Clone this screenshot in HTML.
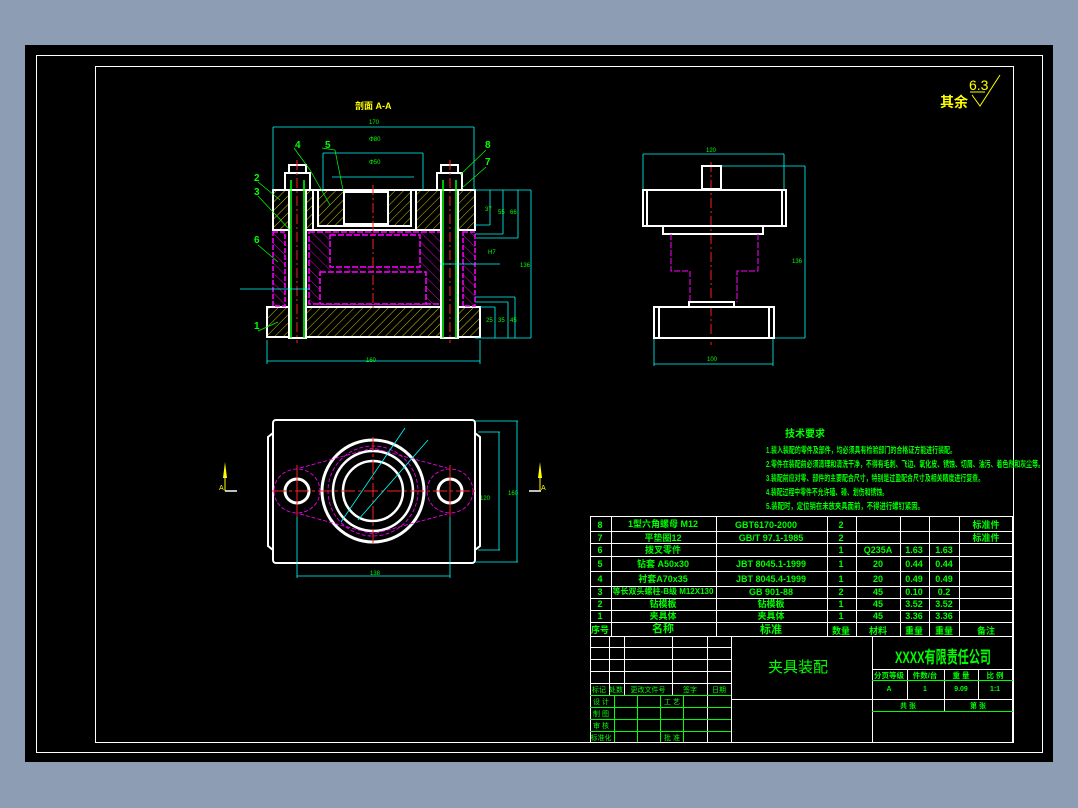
<!DOCTYPE html>
<html><head><meta charset="utf-8"><style>
html,body{margin:0;padding:0;width:1078px;height:808px;overflow:hidden;background:#8d9db3}
svg{position:absolute;left:0;top:0}
text{font-family:"Liberation Sans","Noto Sans CJK SC",sans-serif}
</style></head><body>
<svg width="1078" height="808" viewBox="0 0 1078 808">
<defs>
<pattern id="hy" width="6" height="6" patternUnits="userSpaceOnUse" patternTransform="rotate(45)"><line x1="0" y1="0" x2="0" y2="6" stroke="#ffff00" stroke-width="0.8"/></pattern>
<pattern id="hm" width="7" height="7" patternUnits="userSpaceOnUse" patternTransform="rotate(-45)"><line x1="0" y1="0" x2="0" y2="7" stroke="#ff00ff" stroke-width="0.8"/></pattern>
</defs>
<rect x="0" y="0" width="1078" height="808" fill="#8d9db3"/>
<rect x="25" y="45" width="1028" height="717" fill="#000"/>
<rect x="36.5" y="55.5" width="1006" height="697" fill="none" stroke="#fff" stroke-width="1"/>
<rect x="95.5" y="66.5" width="918" height="676" fill="none" stroke="#fff" stroke-width="1"/>

<text x="940" y="107" fill="#ffff00" font-size="14" font-weight="bold">其余</text>
<text x="969" y="90" fill="#ffff00" font-size="14">6.3</text>
<path d="M970 92 L985 92 M972 95 L980 106 L1000 75" stroke="#ffff00" fill="none" stroke-width="1"/>
<text x="355" y="109" fill="#ffff00" font-size="9" font-weight="bold">剖面 A-A</text>

<g fill="none" stroke-width="2">
<rect x="267" y="307" width="213" height="30" fill="url(#hy)" stroke="#fff"/>
<rect x="273" y="190" width="202" height="40" fill="url(#hy)" stroke="#fff"/>
<rect x="313" y="190" width="103" height="40" fill="#000" stroke="#fff"/>
<rect x="318" y="190" width="93" height="36" fill="url(#hy)" stroke="#fff"/>
<rect x="344" y="192" width="44" height="32" fill="#000" stroke="#fff"/>
<rect x="309" y="232" width="133" height="72" fill="url(#hm)" stroke="#ff00ff" stroke-dasharray="6 2" stroke-width="1.5"/>
<rect x="320" y="272" width="106" height="32" fill="#000" stroke="#ff00ff" stroke-dasharray="6 2" stroke-width="1.5"/>
<rect x="330" y="235" width="90" height="32" fill="#000" stroke="#ff00ff" stroke-dasharray="6 2" stroke-width="1.5"/>
<rect x="273" y="232" width="12" height="74" fill="url(#hm)" stroke="#ff00ff" stroke-dasharray="5 2" stroke-width="1.5"/>
<rect x="463" y="232" width="12" height="74" fill="url(#hm)" stroke="#ff00ff" stroke-dasharray="5 2" stroke-width="1.5"/>
<rect x="289" y="165" width="17" height="173" fill="#000" stroke="#fff"/>
<rect x="441" y="165" width="17" height="173" fill="#000" stroke="#fff"/>
<rect x="285" y="173" width="25" height="17" fill="#000" stroke="#fff"/>
<rect x="437" y="173" width="25" height="17" fill="#000" stroke="#fff"/>
<line x1="291" y1="180" x2="291" y2="338" stroke="#00ff00" stroke-width="1.5"/><line x1="304" y1="180" x2="304" y2="338" stroke="#00ff00" stroke-width="1.5"/>
<line x1="443" y1="180" x2="443" y2="338" stroke="#00ff00" stroke-width="1.5"/><line x1="456" y1="180" x2="456" y2="338" stroke="#00ff00" stroke-width="1.5"/>
</g>
<g stroke="#ff2020" stroke-width="1" stroke-dasharray="10 3 2 3">
<line x1="297" y1="160" x2="297" y2="343"/><line x1="450" y1="160" x2="450" y2="343"/><line x1="373" y1="185" x2="373" y2="310"/>
<line x1="711" y1="162" x2="711" y2="345"/>
</g>
<g stroke="#00ffff" stroke-width="0.8" fill="none">
<path d="M273 127 H474 M273 127 V190 M474 127 V190"/>
<path d="M323 153 H423 M323 153 V190 M423 153 V190"/>
<path d="M332 177 H414"/>
<path d="M267 361 H480 M267 340 V364 M480 340 V364"/>
<path d="M475 190 H531 M531 190 V338 M475 338 H531"/>
<path d="M475 225 H490 M490 190 V225 M475 234 H503 M503 190 V234 M476 238 H518 M518 190 V238"/>
<path d="M475 297 H515 M515 297 V338 M475 302 H508 M508 302 V338 M480 307 H495 M495 307 V338"/>
<path d="M240 289 H310 M440 264 H500"/>
<path d="M643 154 H784 M643 154 V190 M784 154 V190"/>
<path d="M719 166 H805 M805 166 V338 M772 338 H805"/>
<path d="M654 364 H773 M654 338 V366 M773 338 V366"/>
</g>
<g fill="#00ff00" font-size="6">
<text x="369" y="124">170</text><text x="369" y="141">Φ80</text><text x="369" y="164">Φ50</text><text x="366" y="362">160</text>
<text x="485" y="211">37</text><text x="498" y="214">55</text><text x="510" y="214">66</text><text x="520" y="267">136</text>
<text x="486" y="322">25</text><text x="498" y="322">35</text><text x="510" y="322">45</text><text x="488" y="254">H7</text>
<text x="706" y="152">120</text><text x="792" y="263">136</text><text x="707" y="361">100</text>
<text x="480" y="500">120</text><text x="508" y="495">160</text><text x="370" y="575">138</text>
</g>
<g fill="#00ff00" font-size="10" font-weight="bold">
<text x="295" y="148">4</text><text x="325" y="148">5</text><text x="485" y="148">8</text><text x="485" y="165">7</text>
<text x="254" y="181">2</text><text x="254" y="195">3</text><text x="254" y="243">6</text><text x="254" y="329">1</text>
</g>
<g stroke="#00ff00" stroke-width="0.7" fill="none">
<path d="M294 148 L310 170 L330 205 M322 148 L335 150 L343 190 M486 150 L460 175 M486 167 L462 188 M258 182 L280 200 M258 196 L290 230 M258 245 L278 262 M258 331 L278 322"/>
</g>

<g fill="none" stroke="#fff" stroke-width="2">
<rect x="702" y="166" width="19" height="23"/>
<rect x="643" y="190" width="143" height="36"/>
<line x1="647" y1="190" x2="647" y2="226"/><line x1="782" y1="190" x2="782" y2="226"/>
<rect x="663" y="226" width="100" height="8"/>
<rect x="654" y="307" width="120" height="31"/>
<line x1="659" y1="307" x2="659" y2="338"/><line x1="769" y1="307" x2="769" y2="338"/>
<rect x="689" y="302" width="45" height="5"/>
</g>
<path d="M671 234 V271 H690 V302 M758 234 V271 H737 V302" fill="none" stroke="#ff00ff" stroke-dasharray="6 2"/>

<g fill="none" stroke="#fff" stroke-width="2">
<rect x="273" y="420" width="202" height="143" rx="3"/>
<path d="M273 433 L268 437 V546 L273 550 M475 433 L480 437 V546 L475 550"/>
<circle cx="373" cy="491" r="51" stroke-width="3"/>
<circle cx="373" cy="491" r="40" stroke-width="2.5"/>
<circle cx="373" cy="491" r="30" stroke-width="2.5"/>
<circle cx="297" cy="491" r="12" stroke-width="3"/>
<circle cx="450" cy="491" r="12" stroke-width="3"/>
</g>
<g fill="none" stroke="#ff00ff" stroke-width="0.8" stroke-dasharray="4 2">
<ellipse cx="297" cy="491" rx="23" ry="22"/><ellipse cx="450" cy="491" rx="23" ry="22"/>
<circle cx="373" cy="491" r="45"/>
<path d="M300 468 L373 448 L447 468 M300 514 L373 534 L447 514"/>
</g>
<g stroke="#ff2020" stroke-width="1">
<line x1="272" y1="491" x2="475" y2="491" stroke-dasharray="14 3 3 3"/>
<line x1="373" y1="437" x2="373" y2="545" stroke-dasharray="14 3 3 3"/>
<line x1="297" y1="465" x2="297" y2="517"/><line x1="450" y1="465" x2="450" y2="517"/>
</g>
<g stroke="#00ffff" stroke-width="0.8" fill="none">
<path d="M341 522 L405 428 M358 520 L428 440 M297 517 V578 M450 517 V578 M297 576 H450"/>
<path d="M475 421 H518 M517 421 V562 M475 562 H518 M478 432 H500 M499 432 V550 M478 550 H500"/>
</g>
<g fill="#ffff00"><path d="M225 462 L227 478 H223 Z"/><path d="M540 462 L542 478 H538 Z"/></g>
<g stroke="#fff" stroke-width="1.5"><line x1="225" y1="491" x2="237" y2="491"/><line x1="529" y1="491" x2="541" y2="491"/></g>
<g stroke="#ffff00"><line x1="225" y1="478" x2="225" y2="491"/><line x1="540" y1="478" x2="540" y2="491"/></g>
<text x="219" y="490" fill="#ffff00" font-size="7">A</text><text x="541" y="490" fill="#ffff00" font-size="7">A</text>

<g fill="#00ff00" font-size="8.5" font-weight="bold">
<text x="785" y="437" font-size="10">技术要求</text>
<text x="766" y="453" textLength="190" lengthAdjust="spacingAndGlyphs">1.装入装配的零件及部件，均必须具有检验部门的合格证方能进行装配。</text>
<text x="766" y="467" textLength="278" lengthAdjust="spacingAndGlyphs">2.零件在装配前必须清理和清洗干净，不得有毛刺、飞边、氧化皮、锈蚀、切屑、油污、着色剂和灰尘等。</text>
<text x="766" y="481" textLength="218" lengthAdjust="spacingAndGlyphs">3.装配前应对零、部件的主要配合尺寸，特别是过盈配合尺寸及相关精度进行复查。</text>
<text x="766" y="495" textLength="122" lengthAdjust="spacingAndGlyphs">4.装配过程中零件不允许磕、碰、划伤和锈蚀。</text>
<text x="766" y="509" textLength="158" lengthAdjust="spacingAndGlyphs">5.装配时，定位销在未放夹具面前，不得进行螺钉紧固。</text>
</g>

<g stroke="#fff" stroke-width="1" fill="none">
<rect x="590.5" y="516.5" width="422" height="226"/>
<path d="M590 531.5 H1013 M590 543.5 H1013 M590 556.5 H1013 M590 571.5 H1013 M590 586.5 H1013 M590 598.5 H1013 M590 610.5 H1013 M590 622.5 H1013 M590 636.5 H1013"/>
<path d="M611.5 516 V636 M716.5 516 V636 M827.5 516 V636 M856.5 516 V636 M900.5 516 V636 M929.5 516 V636 M959.5 516 V636"/>
<path d="M590 647.5 H731 M590 659.5 H731 M590 671.5 H731 M590 683.5 H731 M609.5 636 V695 M624.5 636 V695 M672.5 636 V695 M707.5 636 V742 M731.5 636 V742 M872.5 636 V742"/>
<path d="M731 699.5 H872 M872 669.5 H1013 M872 699.5 H1013 M907.5 669 V699 M944.5 669 V711 M978.5 669 V699"/>
</g>
<g stroke="#00ff00" stroke-width="1" fill="none">
<path d="M590 695.5 H731 M590 707.5 H731 M590 719.5 H731 M590 731.5 H731 M614.5 695 V742 M637.5 695 V742 M660.5 695 V742 M683.5 695 V742"/>
<path d="M872 680.5 H1013 M872 711.5 H1013"/>
</g>
<g fill="#00ff00" font-size="9" text-anchor="middle" font-weight="bold">
<text x="600" y="528">8</text><text x="663" y="527">1型六角螺母 M12</text><text x="766" y="528">GBT6170-2000</text><text x="841" y="528">2</text><text x="986" y="528">标准件</text>
<text x="600" y="541">7</text><text x="663" y="541">平垫圈12</text><text x="771" y="541">GB/T 97.1-1985</text><text x="841" y="541">2</text><text x="986" y="541">标准件</text>
<text x="600" y="553">6</text><text x="663" y="553">拨叉零件</text><text x="841" y="553">1</text><text x="878" y="553">Q235A</text><text x="914" y="553">1.63</text><text x="944" y="553">1.63</text>
<text x="600" y="567">5</text><text x="663" y="567">钻套 A50x30</text><text x="771" y="567">JBT 8045.1-1999</text><text x="841" y="567">1</text><text x="878" y="567">20</text><text x="914" y="567">0.44</text><text x="944" y="567">0.44</text>
<text x="600" y="582">4</text><text x="663" y="582">衬套A70x35</text><text x="771" y="582">JBT 8045.4-1999</text><text x="841" y="582">1</text><text x="878" y="582">20</text><text x="914" y="582">0.49</text><text x="944" y="582">0.49</text>
<text x="600" y="595">3</text><text x="663" y="594" font-size="8">等长双头螺柱-B级 M12X130</text><text x="771" y="595">GB 901-88</text><text x="841" y="595">2</text><text x="878" y="595">45</text><text x="914" y="595">0.10</text><text x="944" y="595">0.2</text>
<text x="600" y="607">2</text><text x="663" y="607">钻模板</text><text x="771" y="607">钻模板</text><text x="841" y="607">1</text><text x="878" y="607">45</text><text x="914" y="607">3.52</text><text x="944" y="607">3.52</text>
<text x="600" y="619">1</text><text x="663" y="619">夹具体</text><text x="771" y="619">夹具体</text><text x="841" y="619">1</text><text x="878" y="619">45</text><text x="914" y="619">3.36</text><text x="944" y="619">3.36</text>
<text x="600" y="633">序号</text><text x="663" y="632" font-size="11">名称</text><text x="771" y="633" font-size="11">标准</text><text x="841" y="634">数量</text><text x="878" y="634">材料</text><text x="914" y="634">重量</text><text x="944" y="634">重量</text><text x="986" y="634">备注</text>
<text x="943" y="663" font-size="17" textLength="96" lengthAdjust="spacingAndGlyphs">XXXX有限责任公司</text>
<text x="889" y="678" font-size="7.5">分页等级</text><text x="925" y="678" font-size="7.5">件数/台</text><text x="961" y="678" font-size="7.5">重 量</text><text x="995" y="678" font-size="7.5">比 例</text>
<text x="889" y="691" font-size="7">A</text><text x="925" y="691" font-size="7">1</text><text x="961" y="691" font-size="7">9.09</text><text x="995" y="691" font-size="7">1:1</text>
<text x="908" y="708" font-size="7">共 张</text><text x="978" y="708" font-size="7">第 张</text>
<g font-size="7" font-weight="normal"><text x="599" y="692">标记</text><text x="616" y="692">处数</text><text x="648" y="692">更改文件号</text><text x="690" y="692">签字</text><text x="719" y="692">日期</text>
<text x="601" y="704">设 计</text><text x="672" y="704">工 艺</text><text x="601" y="716">制 图</text><text x="601" y="728">审 核</text><text x="601" y="740">标准化</text><text x="672" y="740">批 准</text></g>
</g>
<text x="798" y="672" fill="#00ff00" font-size="15" text-anchor="middle">夹具装配</text>
</svg>
</body></html>
